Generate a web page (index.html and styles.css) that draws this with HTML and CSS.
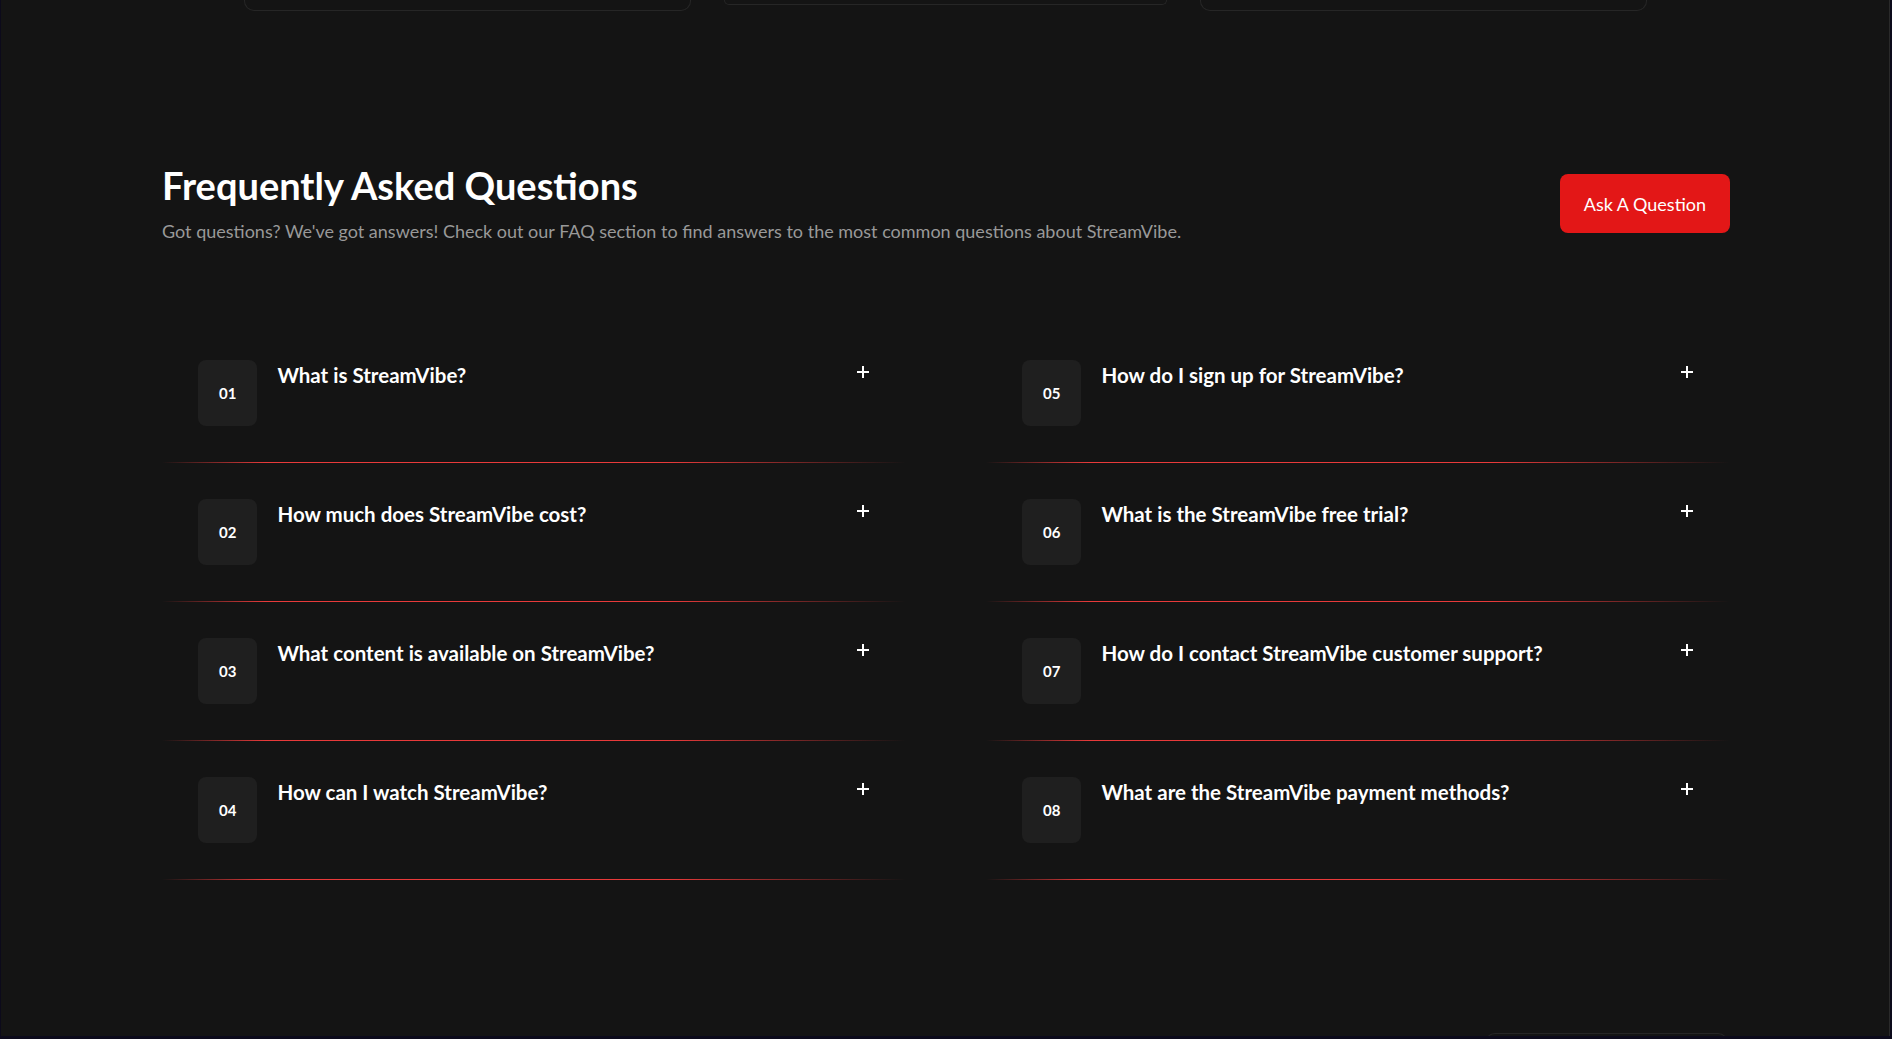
FILE: index.html
```html
<!DOCTYPE html>
<html lang="en">
<head>
<meta charset="utf-8">
<title>StreamVibe FAQ</title>
<link rel="stylesheet" href="styles.css">
</head>
<body>
<div class="page">
  <div class="prev-cards">
    <div class="ghost-card"></div>
    <div class="ghost-card ghost-card--short"></div>
    <div class="ghost-card"></div>
  </div>

  <section class="faq">
    <header class="faq-head">
      <div class="faq-titles">
        <h2 class="faq-title">Frequently Asked Questions</h2>
        <p class="faq-sub">Got questions? We've got answers! Check out our FAQ section to find answers to the most common questions about StreamVibe.</p>
      </div>
      <button class="ask-btn" type="button">Ask A Question</button>
    </header>

    <div class="faq-grid">
      <div class="faq-col">
        <div class="faq-item">
          <div class="faq-num">01</div>
          <div class="faq-q">What is StreamVibe?</div>
          <svg class="faq-plus" width="12" height="12" viewBox="0 0 12 12"><path d="M6 0v12M0 6h12" stroke="#fff" stroke-width="2"/></svg>
        </div>
        <div class="faq-item">
          <div class="faq-num">02</div>
          <div class="faq-q">How much does StreamVibe cost?</div>
          <svg class="faq-plus" width="12" height="12" viewBox="0 0 12 12"><path d="M6 0v12M0 6h12" stroke="#fff" stroke-width="2"/></svg>
        </div>
        <div class="faq-item">
          <div class="faq-num">03</div>
          <div class="faq-q">What content is available on StreamVibe?</div>
          <svg class="faq-plus" width="12" height="12" viewBox="0 0 12 12"><path d="M6 0v12M0 6h12" stroke="#fff" stroke-width="2"/></svg>
        </div>
        <div class="faq-item">
          <div class="faq-num">04</div>
          <div class="faq-q">How can I watch StreamVibe?</div>
          <svg class="faq-plus" width="12" height="12" viewBox="0 0 12 12"><path d="M6 0v12M0 6h12" stroke="#fff" stroke-width="2"/></svg>
        </div>
      </div>
      <div class="faq-col">
        <div class="faq-item">
          <div class="faq-num">05</div>
          <div class="faq-q">How do I sign up for StreamVibe?</div>
          <svg class="faq-plus" width="12" height="12" viewBox="0 0 12 12"><path d="M6 0v12M0 6h12" stroke="#fff" stroke-width="2"/></svg>
        </div>
        <div class="faq-item">
          <div class="faq-num">06</div>
          <div class="faq-q">What is the StreamVibe free trial?</div>
          <svg class="faq-plus" width="12" height="12" viewBox="0 0 12 12"><path d="M6 0v12M0 6h12" stroke="#fff" stroke-width="2"/></svg>
        </div>
        <div class="faq-item">
          <div class="faq-num">07</div>
          <div class="faq-q">How do I contact StreamVibe customer support?</div>
          <svg class="faq-plus" width="12" height="12" viewBox="0 0 12 12"><path d="M6 0v12M0 6h12" stroke="#fff" stroke-width="2"/></svg>
        </div>
        <div class="faq-item">
          <div class="faq-num">08</div>
          <div class="faq-q">What are the StreamVibe payment methods?</div>
          <svg class="faq-plus" width="12" height="12" viewBox="0 0 12 12"><path d="M6 0v12M0 6h12" stroke="#fff" stroke-width="2"/></svg>
        </div>
      </div>
    </div>
  </section>

  <div class="next-cards">
    <div class="ghost-card-top"></div>
  </div>
</div>
</body>
</html>
```

FILE: styles.css
```css
* { box-sizing: border-box; }

html, body {
  margin: 0;
  padding: 0;
}

body {
  background: #0c0a1b;
  font-family: Lato, "Noto Sans", sans-serif;
  color: #fff;
}

.page {
  margin-left: 1px;
  width: 1889px;
  height: 1036px;
  background: #141414;
  border-right: 1px solid #2a2a2a;
  overflow: hidden;
  display: flex;
  flex-direction: column;
}

.prev-cards {
  height: 12px;
  display: flex;
  align-items: flex-start;
  gap: 33px;
  padding-left: 243px;
}

.ghost-card {
  width: 447px;
  height: 11px;
  border: 1px solid #262626;
  border-top: none;
  border-radius: 0 0 10px 10px;
}

.ghost-card--short {
  height: 5px;
  width: 443px;
  border-radius: 0 0 8px 8px;
}

.faq {
  width: 1568px;
  margin-left: 161px;
  padding-top: 151px;
}

.faq-head {
  display: flex;
  align-items: center;
  justify-content: space-between;
}

.faq-title {
  margin: 0;
  font-size: 38px;
  line-height: 1.2;
  font-weight: 700;
  color: #fff;
}

.faq-sub {
  margin: 9px 0 0;
  font-size: 18px;
  line-height: 1.5;
  color: #999999;
}

.ask-btn {
  height: 59px;
  padding: 0 24px;
  border: none;
  border-radius: 8px;
  background: #e31717;
  color: #fff;
  font-family: inherit;
  font-size: 18px;
  font-weight: 400;
}

.faq-grid {
  margin-top: 79px;
  display: grid;
  grid-template-columns: 1fr 1fr;
  column-gap: 80px;
}

.faq-item {
  position: relative;
  display: flex;
  align-items: flex-start;
  gap: 20px;
  padding: 36px 37px 36px 36px;
  height: 139px;
}

.faq-item::after {
  content: "";
  position: absolute;
  left: 0;
  right: 0;
  bottom: 0;
  height: 1px;
  background: linear-gradient(90deg, rgba(229, 40, 40, 0) 0%, #e83a3a 14%, #e83a3a 68%, rgba(229, 40, 40, 0) 100%);
}

.faq-num {
  flex: none;
  height: 66px;
  padding: 0 21px;
  display: flex;
  align-items: center;
  justify-content: center;
  background: #1f1f1f;
  border-radius: 8px;
  font-size: 15px;
  font-weight: 700;
  color: #fff;
}

.faq-q {
  flex: 1;
  font-size: 20.5px;
  line-height: 1.5;
  font-weight: 700;
  color: #fff;
}

.faq-plus {
  flex: none;
  margin-top: 6px;
}

.next-cards {
  margin-top: auto;
  height: 3px;
  padding-left: 1484px;
}

.ghost-card-top {
  width: 243px;
  height: 12px;
  border: 1px solid #262626;
  border-bottom: none;
  border-radius: 10px 10px 0 0;
}
```
